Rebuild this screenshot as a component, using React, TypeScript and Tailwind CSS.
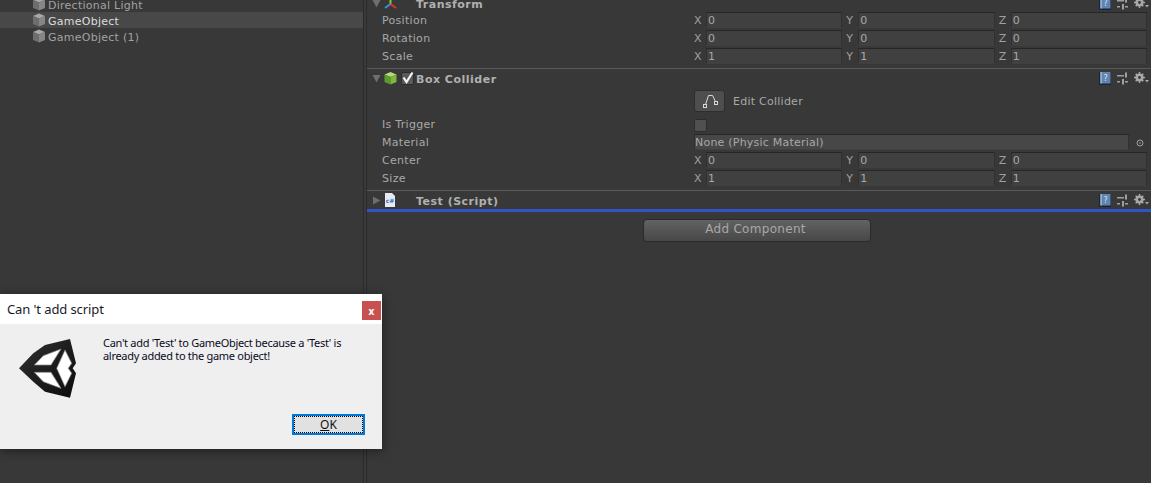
const sans = { fontFamily: '"DejaVu Sans", sans-serif' };

function CubeIcon() {
  return (
    <svg width="14" height="14" viewBox="0 0 14 14" className="shrink-0">
      <path d="M7 0.5 L13 3 L7 5.5 L1 3 Z" fill="#a8a8a8" />
      <path d="M1 3 L7 5.5 V13.5 L1 11 Z" fill="#6e6e6e" />
      <path d="M13 3 L7 5.5 V13.5 L13 11 Z" fill="#868686" />
    </svg>
  );
}

function HierarchyRow({ label, selected }: { label: string; selected?: boolean }) {
  return (
    <div className={`flex h-4 items-center pl-[32px] ${selected ? 'bg-[#484848] text-[#dcdcdc]' : 'text-[#a2a2a2]'}`}>
      <CubeIcon />
      <span className="ml-[2px] pt-[4px] text-[11px] tracking-[0.26px]">{label}</span>
    </div>
  );
}

function HeaderIcons() {
  return (
    <div className="ml-auto mr-[1px] flex items-center gap-[6px]">
      <svg width="12" height="13" viewBox="0 0 12 13">
        <rect x="0" y="0" width="12" height="13" fill="#17263c" />
        <rect x="1.5" y="0" width="10" height="11.5" fill="#5f84b0" />
        <rect x="1.5" y="0" width="1" height="11.5" fill="#c8d6e6" />
        <text x="6.5" y="9" fontSize="8" textAnchor="middle" fill="#dbe6f2" fontFamily="DejaVu Sans">?</text>
      </svg>
      <svg width="11" height="13" viewBox="0 0 11 13" fill="#a0a0a0">
        <rect x="0" y="3" width="7" height="1.5" />
        <rect x="8" y="0.5" width="2" height="5" />
        <rect x="0" y="9" width="3" height="1.5" />
        <rect x="5" y="7" width="2" height="5.5" />
        <rect x="8" y="9" width="3" height="1.5" />
      </svg>
      <svg width="15" height="13" viewBox="0 0 15 13">
        <circle cx="5.5" cy="5.5" r="3" fill="none" stroke="#a8a8a8" strokeWidth="2.2" />
        <path d="M5.5 0 V11 M0 5.5 H11 M1.7 1.7 L9.3 9.3 M9.3 1.7 L1.7 9.3" stroke="#a8a8a8" strokeWidth="1.5" />
        <circle cx="5.5" cy="5.5" r="1.4" fill="#383838" />
        <path d="M11 8 H15 L13 10.5 Z" fill="#a8a8a8" />
      </svg>
    </div>
  );
}

function Arrow({ open }: { open?: boolean }) {
  return (
    <svg width="9" height="9" viewBox="0 0 9 9" className="shrink-0">
      <path d={open ? 'M0.5 1 H8.5 L4.5 8.5 Z' : 'M1 0.5 L8.5 4.5 L1 8.5 Z'} fill="#6e6e6e" />
    </svg>
  );
}

function ComponentHeader({ title, icon, open, check }: { title: string; icon: React.ReactNode; open?: boolean; check?: boolean }) {
  return (
    <div className="flex h-[18px] items-center pl-[5px] pr-[1px]">
      <Arrow open={open} />
      <div className="ml-[2px] flex w-[14px] shrink-0 justify-center">{icon}</div>
      {check ? (
        <div className="ml-[4px] flex h-[13px] w-[13px] items-center justify-center rounded-[2px] border border-[#2c2c2c] bg-[#5a5a5a]">
          <svg width="13" height="13" viewBox="0 0 13 13" className="-mt-[2px] shrink-0">
            <path d="M2.5 6.5 L5.5 11 L11.5 1.5" fill="none" stroke="#f4f4f4" strokeWidth="2.2" />
          </svg>
        </div>
      ) : (
        <div className="ml-[4px] w-[13px]" />
      )}
      <span className="ml-[2px] pt-[4px] text-[11px] font-bold tracking-[0.5px] text-[#b0b0b0]">{title}</span>
      <HeaderIcons />
    </div>
  );
}

function Field({ value, light }: { value: string; light?: boolean }) {
  return (
    <div className={`mb-[2px] h-[16px] flex-1 border-t border-t-[#262626] border-x border-x-[#303030] border-b border-b-[#404040] text-[11px] leading-[16px] tracking-[0.22px] text-[#a8a8a8] ${light ? 'bg-[#474747]' : 'bg-[#404040] pl-[1px]'}`}>
      {value}
    </div>
  );
}

function VectorRow({ label, values }: { label: string; values: string[] }) {
  const axes = ['X', 'Y', 'Z'];
  return (
    <div className="flex h-[18px] items-center pl-[15px] pr-[4px]">
      <span className="w-[312px] shrink-0 text-[11px] tracking-[0.3px] text-[#a8a8a8]">{label}</span>
      <div className="flex flex-1 gap-[4px]">
        {axes.map((a, i) => (
          <div key={a} className="flex flex-1 items-center gap-[4px]">
            <span className="w-[8px] text-[11px] text-[#a0a0a0]">{a}</span>
            <Field value={values[i]} />
          </div>
        ))}
      </div>
    </div>
  );
}

function Separator() {
  return <div className="mt-[2px] h-px bg-[#5a5a5a]" />;
}

function UnityLogo() {
  return (
    <svg width="58" height="60" viewBox="0 0 58 60">
      <defs>
        <linearGradient id="u" x1="0" y1="0" x2="1" y2="1">
          <stop offset="0" stopColor="#303030" />
          <stop offset="1" stopColor="#0c0c0c" />
        </linearGradient>
      </defs>
      <path d="M0 29.3 L14.3 14.3 L26 6 L51 0 L57 24.3 L53.7 29.3 L57 34.3 L51 58.7 L26 52.7 L14.3 42.7 Z" fill="url(#u)" />
      <g fill="#ffffff" stroke="#8a8a8a" strokeOpacity="0.7" strokeWidth="1">
        <path d="M15.3 26 L24.3 16.7 L42 10 L32 26 Z" />
        <path d="M15.3 33.3 L32 33.3 L42 49.3 L24.3 42.7 Z" />
        <path d="M46 11 L52.7 24.3 L49.3 29.3 L52.7 34.3 L46 47.7 L37.7 29.3 Z" />
      </g>
    </svg>
  );
}

export default function App() {
  return (
    <div className="relative flex h-[483px] w-[1151px] overflow-hidden bg-[#383838]" style={sans}>
      {/* hierarchy */}
      <div className="w-[363px] shrink-0 -mt-[4px]">
        <HierarchyRow label="Directional Light" />
        <HierarchyRow label="GameObject" selected />
        <HierarchyRow label="GameObject (1)" />
      </div>
      <div className="w-[4px] shrink-0 border-x border-[#2a2a2a] bg-[#3a3a3a]" />

      {/* inspector */}
      <div className="min-w-0 flex-1 -mt-[6px]">
        <ComponentHeader
          title="Transform"
          open
          icon={
            <svg width="13" height="13" viewBox="0 0 13 13">
              <path d="M6.5 7 V1" stroke="#7ccf3a" strokeWidth="2" />
              <path d="M6.5 7 L1 11" stroke="#3a8fd8" strokeWidth="2" />
              <path d="M6.5 7 L12 11" stroke="#d8362f" strokeWidth="2" />
            </svg>
          }
        />
        <VectorRow label="Position" values={['0', '0', '0']} />
        <VectorRow label="Rotation" values={['0', '0', '0']} />
        <VectorRow label="Scale" values={['1', '1', '1']} />
        <Separator />

        <ComponentHeader
          title="Box Collider"
          open
          check
          icon={
            <svg width="13" height="14" viewBox="0 0 13 14">
              <path d="M6.5 1 L12.5 3.5 L6.5 6 L0.5 3.5 Z" fill="#b4dc78" />
              <path d="M0.5 3.5 L6.5 6 V13.5 L0.5 11 Z" fill="#5f9a2c" />
              <path d="M12.5 3.5 L6.5 6 V13.5 L12.5 11 Z" fill="#7fb83f" />
            </svg>
          }
        />
        <div className="mt-[3px] flex h-[22px] items-center">
          <div className="ml-[327px] flex h-[22px] w-[31px] items-center justify-center rounded-[3px] border border-[#2e2e2e] bg-[#4e4e4e]">
            <svg width="16" height="14" viewBox="0 0 16 14" fill="none" stroke="#d8d8d8">
              <rect x="1.5" y="10.5" width="3" height="3" />
              <rect x="12.5" y="7.5" width="3" height="3" />
              <path d="M3.5 10.5 L6.5 1.5 H10.5 L13.5 7.5" />
            </svg>
          </div>
          <span className="ml-[8px] pt-[2px] text-[11px] tracking-[0.25px] text-[#a8a8a8]">Edit Collider</span>
        </div>
        <div className="mt-[4px] flex h-[18px] items-center pl-[15px]">
          <span className="w-[312px] shrink-0 text-[11px] tracking-[0.3px] text-[#a8a8a8]">Is Trigger</span>
          <div className="h-[13px] w-[13px] rounded-[2px] border border-[#2c2c2c] bg-[#505050]" />
        </div>
        <div className="flex h-[18px] items-center pl-[15px] pr-[4px]">
          <span className="w-[312px] shrink-0 text-[11px] tracking-[0.3px] text-[#a8a8a8]">Material</span>
          <Field value="None (Physic Material)" light />
          <svg width="18" height="10" viewBox="0 0 18 10" fill="none" className="shrink-0">
            <circle cx="11" cy="5" r="3" stroke="#a0a0a0" />
            <circle cx="11" cy="5" r="0.8" fill="#a0a0a0" />
          </svg>
        </div>
        <VectorRow label="Center" values={['0', '0', '0']} />
        <VectorRow label="Size" values={['1', '1', '1']} />
        <Separator />

        <ComponentHeader
          title="Test (Script)"
          icon={
            <svg width="10" height="14" viewBox="0 0 10 14">
              <path d="M0 0 H7 L10 3 V14 H0 Z" fill="#e6ebf2" />
              <text x="5" y="10" fontSize="6" fontWeight="bold" textAnchor="middle" fill="#3f6fc4" fontFamily="DejaVu Sans">c#</text>
            </svg>
          }
        />
        <div className="h-[3px] bg-[#3154c4]" />
        <div className="mt-[7px] flex justify-center pr-[4px]">
          <button className="h-[23px] w-[228px] rounded-[4px] border border-[#2a2a2a] bg-gradient-to-b from-[#626262] to-[#484848] pb-[4px] pr-[3px] text-[12px] tracking-[0.3px] text-[#a8a8a8]">
            Add Component
          </button>
        </div>
      </div>

      {/* error dialog */}
      <div
        className="absolute left-0 top-[294px] flex h-[155px] w-[382px] flex-col bg-[#efefef] shadow-[0_2px_10px_rgba(0,0,0,0.45)]"
        style={{ fontFamily: '"Noto Sans", "Liberation Sans", sans-serif' }}
      >
        <div className="flex h-[30px] items-start justify-between bg-white pl-[7px] pr-[1px]">
          <span className="mt-[6px] text-[13px] leading-[18px] tracking-[-0.1px] text-[#1a1a2a]">Can 't add script</span>
          <div className="mt-[7px] flex h-[19px] w-[19px] items-center justify-center bg-[#c75050] text-[10px] font-bold leading-none text-white">x</div>
        </div>
        <div className="flex flex-1 flex-col">
          <div className="flex">
            <div className="ml-[19px] mt-[15px] shrink-0"><UnityLogo /></div>
            <p className="ml-[26px] mt-[12px] w-[250px] text-[11px] leading-[13px] tracking-[-0.3px] text-[#0a0a24]">
              Can't add 'Test' to GameObject because a 'Test' is already added to the game object!
            </p>
          </div>
          <div className="mt-auto mb-[14px] mr-[17px] flex justify-end">
            <button className="h-[21px] w-[73px] border-2 border-[#0078d7] bg-[#e1e1e1] p-0 text-[12px] leading-none text-[#111]">
              <span className="flex h-full w-full items-center justify-center border border-dotted border-black"><span><span className="underline">O</span>K</span></span>
            </button>
          </div>
        </div>
      </div>
    </div>
  );
}
